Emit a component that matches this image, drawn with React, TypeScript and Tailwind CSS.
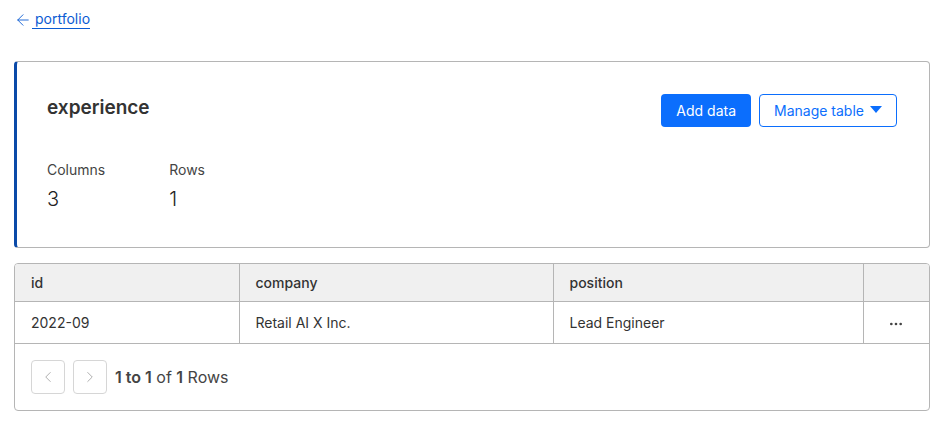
import { ArrowLeft, ChevronLeft, ChevronRight, MoreHorizontal } from "lucide-react";

const columns = ["id", "company", "position"];
const rows = [["2022-09", "Retail AI X Inc.", "Lead Engineer"]];

export default function App() {
    return (
        <div className="min-h-screen bg-white text-[#333] pl-[14px] pr-[18px] pt-[9px]" style={{ fontFamily: "Inter, 'Liberation Sans', sans-serif" }}>
            <a href="#" className="inline-flex items-center gap-0 text-[14px] text-[#0b5bd3] h-[21px]">
                <ArrowLeft size={18} strokeWidth={1.2} />
                <span className="border-b border-[#0b5bd3] leading-[18px] pl-[3px]">portfolio</span>
            </a>

            <div className="mt-[26px] border border-[#b5b5b5] border-l-[3px] border-l-[#0b4aa8] rounded-[4px] h-[187px] pl-[30px] pr-[32px] pt-[32px]">
                <div className="flex items-start justify-between">
                    <h1 className="text-[19px] font-semibold text-[#333] leading-[28px]">experience</h1>
                    <div className="flex gap-2">
                        <button className="h-[33px] px-[15px] rounded-[4px] bg-[#0b6efd] text-white text-[14px]">Add data</button>
                        <button className="h-[33px] pl-[14px] pr-[14px] rounded-[4px] border border-[#0b6efd] text-[#0b6efd] text-[14px] flex items-center gap-[6px]">
                            Manage table
                            <svg width="12" height="8" viewBox="0 0 12 8"><path d="M0 0h12L6 7z" fill="#0b6efd" /></svg>
                        </button>
                    </div>
                </div>
                <div className="flex gap-[64px] mt-[33px]">
                    <div>
                        <div className="text-[14px] text-[#444] leading-[20px]">Columns</div>
                        <div className="text-[20px] font-light text-[#222] mt-[5px] leading-[28px]">3</div>
                    </div>
                    <div>
                        <div className="text-[14px] text-[#444] leading-[20px]">Rows</div>
                        <div className="text-[20px] font-light text-[#222] mt-[5px] leading-[28px]">1</div>
                    </div>
                </div>
            </div>

            <div className="mt-[15px] border border-[#b5b5b5] rounded-[4px] overflow-hidden">
                <table className="w-full border-collapse text-[14px]">
                    <thead>
                        <tr className="bg-[#f0f0f0] h-[38px] border-b border-[#b5b5b5]">
                            {columns.map((c) => (
                                <th key={c} className="text-left font-medium px-[16px] border-r border-[#b5b5b5] text-[#333]">{c}</th>
                            ))}
                            <th className="w-[66px]"></th>
                        </tr>
                    </thead>
                    <tbody>
                        {rows.map((r, i) => (
                            <tr key={i} className="h-[42px] border-b border-[#b5b5b5]">
                                <td className="px-[16px] border-r border-[#b5b5b5] w-[224px]">{r[0]}</td>
                                <td className="px-[16px] border-r border-[#b5b5b5] w-[314px]">{r[1]}</td>
                                <td className="px-[16px] border-r border-[#b5b5b5]">{r[2]}</td>
                                <td className="text-center">
                                    <MoreHorizontal size={16} className="inline text-[#444]" />
                                </td>
                            </tr>
                        ))}
                    </tbody>
                </table>
                <div className="flex items-center h-[66px] pl-[16px] gap-2">
                    <button className="w-[34px] h-[34px] border border-[#d6d6d6] rounded-[4px] flex items-center justify-center text-[#aaa]">
                        <ChevronLeft size={18} strokeWidth={1.25} />
                    </button>
                    <button className="w-[34px] h-[34px] border border-[#d6d6d6] rounded-[4px] flex items-center justify-center text-[#aaa]">
                        <ChevronRight size={18} strokeWidth={1.25} />
                    </button>
                    <span className="text-[16px] text-[#444]"><b className="font-semibold">1 to 1</b> of <b className="font-semibold">1</b> Rows</span>
                </div>
            </div>
        </div>
    );
}
